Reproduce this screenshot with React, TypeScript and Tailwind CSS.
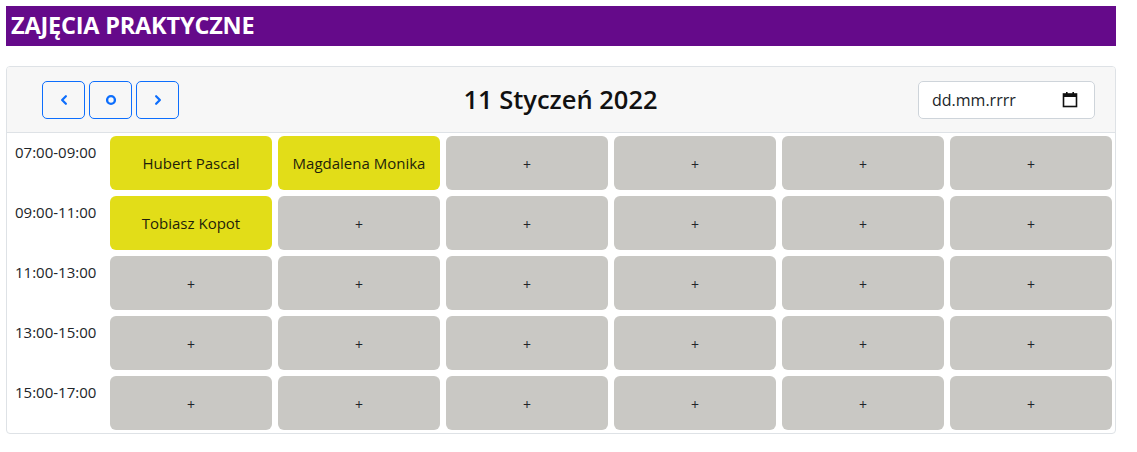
import React from "react";

const hours = ["07:00-09:00", "09:00-11:00", "11:00-13:00", "13:00-15:00", "15:00-17:00"];

// who is booked: [row][col]
const booked: Record<string, string> = {
  "0-0": "Hubert Pascal",
  "0-1": "Magdalena Monika",
  "1-0": "Tobiasz Kopot",
};

function NavButton({ children }: { children: React.ReactNode }) {
  return (
    <button className="w-[43px] h-[38px] flex items-center justify-center border border-[#0d6efd] rounded-[5px] text-[#0d6efd] bg-transparent">
      {children}
    </button>
  );
}

export default function App() {
  return (
    <div className="bg-white w-[1137px] h-[452px] pt-[6px] pl-[6px] pr-[21px]" style={{ fontFamily: '"Open Sans", "Noto Sans", sans-serif' }}>
      <div className="bg-[#650a8a] h-[40px] flex items-center pl-[5px]">
        <h1 className="text-white font-bold text-[23.5px] tracking-[-0.2px]">ZAJĘCIA PRAKTYCZNE</h1>
      </div>

      <div className="mt-[20px] border border-[#dee2e6] rounded-[4px] overflow-hidden">
        <div className="bg-[#f7f7f7] border-b border-[#dee2e6] h-[66px] grid grid-cols-[1fr_auto_1fr] items-center pl-[35px] pr-[20px]">
          <div className="flex gap-[4px]">
            <NavButton>
              <svg width="12" height="12" viewBox="0 0 16 16" fill="none" stroke="currentColor" strokeWidth="3" strokeLinecap="round" strokeLinejoin="round">
                <path d="M10.5 3 5.5 8l5 5" />
              </svg>
            </NavButton>
            <NavButton>
              <svg width="12" height="12" viewBox="0 0 16 16" fill="none" stroke="currentColor" strokeWidth="3.2">
                <circle cx="8" cy="8" r="5.2" />
              </svg>
            </NavButton>
            <NavButton>
              <svg width="12" height="12" viewBox="0 0 16 16" fill="none" stroke="currentColor" strokeWidth="3" strokeLinecap="round" strokeLinejoin="round">
                <path d="M5.5 3l5 5-5 5" />
              </svg>
            </NavButton>
          </div>
          <div className="text-center text-[25.5px] font-semibold text-[#111] pr-[16px]">11 Styczeń 2022</div>
          <div className="justify-self-end w-[177px] h-[38px] bg-white border border-[#ced4da] rounded-[5px] flex items-center justify-between pl-[13px] pr-[16px]">
            <span className="text-[16px] text-[#212529]">dd.mm.rrrr</span>
            <svg width="16" height="17" viewBox="0 0 16 17" fill="none">
              <rect x="1.5" y="3" width="13" height="12.5" stroke="#111" strokeWidth="1.6" />
              <rect x="1.5" y="3" width="13" height="3" fill="#111" />
              <rect x="4" y="1" width="1.6" height="3" fill="#111" />
              <rect x="10.4" y="1" width="1.6" height="3" fill="#111" />
            </svg>
          </div>
        </div>

        <div className="flex flex-col gap-[6px] pt-[3px] pb-[3px] pr-[3px]">
          {hours.map((h, r) => (
            <div key={h} className="flex gap-[6px]">
              <div className="w-[97px] pl-[8px] pt-[5px] text-[15px] text-[#212529] whitespace-nowrap">{h}</div>
              {[0, 1, 2, 3, 4, 5].map((c) => {
                const name = booked[`${r}-${c}`];
                return (
                  <div
                    key={c}
                    className={
                      name
                        ? "w-[162px] h-[54px] rounded-[6px] bg-[#e2dd18] flex items-center justify-center text-[15px] text-[#1f1f0a]"
                        : "w-[162px] h-[54px] rounded-[6px] bg-[#c9c8c4] flex items-center justify-center text-[14px] text-[#212529] pt-[2px]"
                    }
                  >
                    {name ?? "+"}
                  </div>
                );
              })}
            </div>
          ))}
        </div>
      </div>
    </div>
  );
}
